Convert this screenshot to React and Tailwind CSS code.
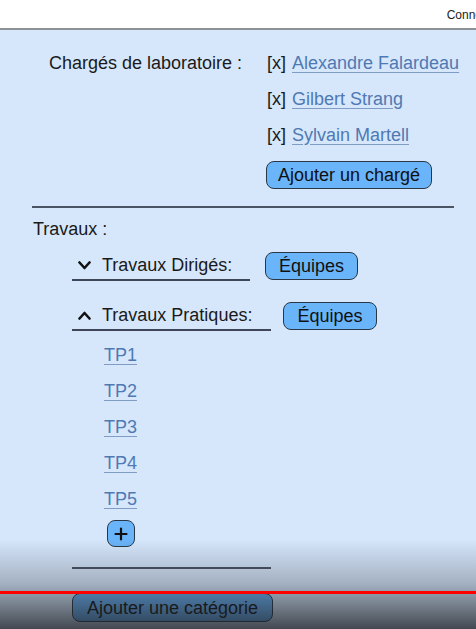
import React from "react";

const btn =
  "rounded-[8px] border-[1.5px] border-[#2a3846] bg-[#6ab4f9] text-[#111] leading-none flex items-center justify-center";

function Chevron({ up }) {
  return (
    <svg width="13" height="9" viewBox="0 0 13 9" className="shrink-0">
      <path
        d={up ? "M1.5 7.5 L6.5 2 L11.5 7.5" : "M1.5 1.5 L6.5 7 L11.5 1.5"}
        fill="none"
        stroke="#111"
        strokeWidth="2.6"
        strokeLinecap="round"
        strokeLinejoin="round"
      />
    </svg>
  );
}

function Charge({ name }) {
  return (
    <div className="h-[36px] flex items-center">
      <span className="text-[#1a1a1a]">[x]</span>
      <a className="ml-[6px] text-[#4f79b2] underline decoration-[#7e9cc4] underline-offset-[3px]">
        {name}
      </a>
    </div>
  );
}

export default function App() {
  return (
    <div
      className="relative w-[476px] h-[629px] overflow-hidden bg-[#d6e7fc] text-[18px] text-[#1a1a1a]"
      style={{ fontFamily: '"Liberation Sans", Arial, sans-serif' }}
    >
      {/* top bar */}
      <div className="h-[30px] bg-white border-b-[2px] border-[#8d9196] flex justify-end items-center overflow-hidden">
        <span className="text-[12px] text-[#222] whitespace-nowrap mr-[-28px] mt-[2px]">Connexion</span>
      </div>

      {/* Chargés */}
      <div className="flex pl-[49px] pt-[15px]">
        <div className="w-[218px] h-[36px] flex items-center">Chargés de laboratoire :</div>
        <div className="flex flex-col">
          <Charge name="Alexandre Falardeau" />
          <Charge name="Gilbert Strang" />
          <Charge name="Sylvain Martell" />
          <button className={btn + " mt-[8px] h-[28px] w-[166px] ml-[-1px] text-[18px]"}>
            Ajouter un chargé
          </button>
        </div>
      </div>

      <div className="mt-[17px] ml-[32px] w-[422px] h-[2px] bg-[#4a5464]" />

      <div className="ml-[33px] mt-[11px] leading-[21px]">Travaux :</div>

      <div className="ml-[72px] mt-[12px] flex flex-col">
        {/* Dirigés */}
        <div className="flex items-end">
          <div className="w-[178px] h-[29px] border-b-[2px] border-[#3d4757] flex items-center pl-[6px]">
            <Chevron />
            <span className="ml-[11px]">Travaux Dirigés:</span>
          </div>
          <button className={btn + " ml-[15px] h-[28px] w-[93px] mb-[1px] text-[18px]"}>Équipes</button>
        </div>

        {/* Pratiques */}
        <div className="flex items-end mt-[21px]">
          <div className="w-[199px] h-[29px] border-b-[2px] border-[#3d4757] flex items-center pl-[6px]">
            <Chevron up />
            <span className="ml-[11px]">Travaux Pratiques:</span>
          </div>
          <button className={btn + " ml-[12px] h-[28px] w-[94px] mb-[1px] text-[18px]"}>Équipes</button>
        </div>

        <div className="flex flex-col pl-[32px] mt-[6px]">
          {["TP1", "TP2", "TP3", "TP4", "TP5"].map((t) => (
            <div key={t} className="h-[36px] flex items-center">
              <a className="text-[#4f79b2] underline decoration-[#7e9cc4] underline-offset-[3px]">{t}</a>
            </div>
          ))}
          <button className={btn + " mt-[3px] ml-[3px] h-[27px] w-[28px]"}>
            <svg width="14" height="14" viewBox="0 0 14 14">
              <path d="M7 1.5 V12.5 M1.5 7 H12.5" stroke="#111" strokeWidth="2.2" strokeLinecap="round" />
            </svg>
          </button>
        </div>

        <div className="mt-[20px] w-[199px] h-[2px] bg-[#4a5464]" />

        <button className={btn + " mt-[24px] h-[29px] w-[201px] text-[18px]"}>Ajouter une catégorie</button>
      </div>

      {/* video overlay gradient */}
      <div className="pointer-events-none absolute inset-x-0 bottom-0 h-[90px] bg-linear-to-b from-[rgba(30,33,38,0)] via-[rgba(30,33,38,0.28)] to-[rgba(30,33,38,0.8)]" />
      {/* progress bar */}
      <div className="pointer-events-none absolute left-0 right-0 top-[591px] h-[3px] bg-[#f00]" />
    </div>
  );
}
